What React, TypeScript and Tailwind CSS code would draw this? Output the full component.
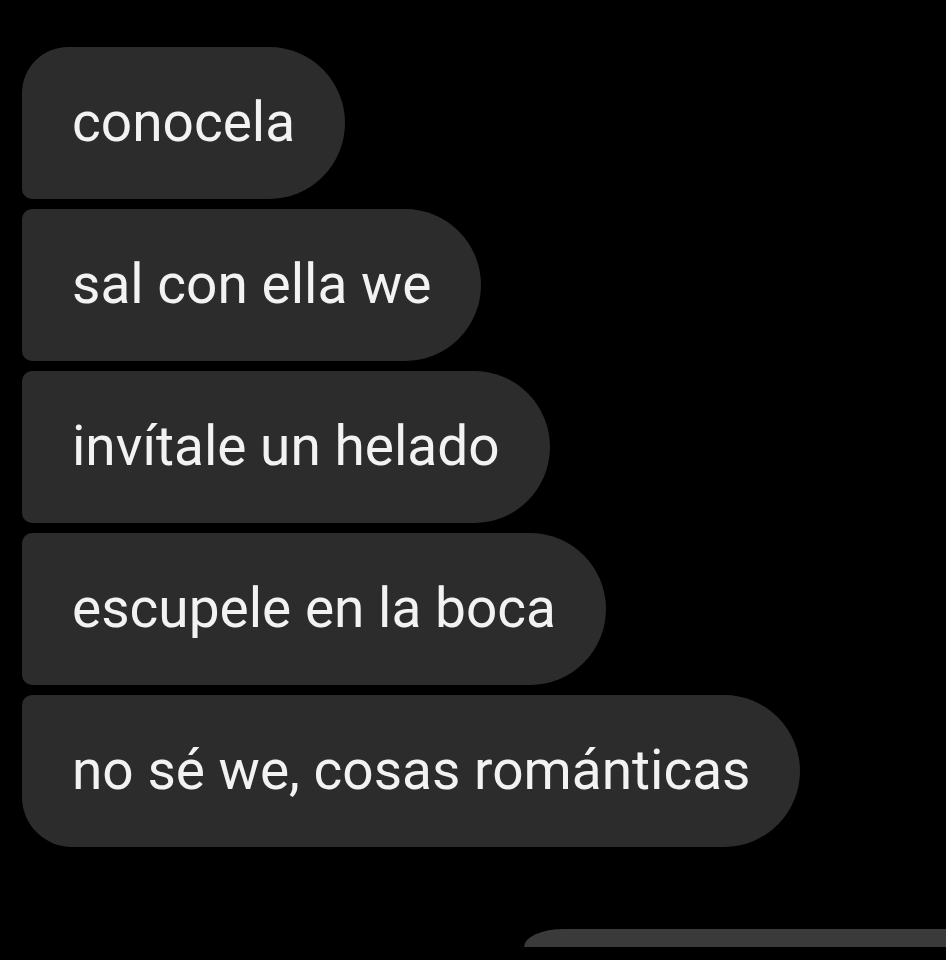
import React from 'react';

const messages = [
  'conocela',
  'sal con ella we',
  'invítale un helado',
  'escupele en la boca',
  'no sé we, cosas románticas',
];

const App: React.FC = () => {
  return (
    <div
      className="w-[946px] h-[960px] bg-black overflow-hidden flex flex-col"
      style={{ fontFamily: 'Roboto, "Liberation Sans", sans-serif' }}
    >
      <div className="flex flex-col items-start gap-[10px] pt-[47px] pl-[22px]">
        {messages.map((text, i) => {
          const first = i === 0;
          const last = i === messages.length - 1;
          return (
            <div
              key={text}
              className={
                'h-[152px] flex items-center px-[50px] bg-[#2c2c2c] text-[#f2f2f2] text-[55px] leading-none whitespace-nowrap rounded-r-[76px] ' +
                (first ? 'rounded-tl-[46px] ' : 'rounded-tl-[10px] ') +
                (last ? 'rounded-bl-[50px]' : 'rounded-bl-[10px]')
              }
            >
              <span className="-mt-[1px]">{text}</span>
            </div>
          );
        })}
      </div>
      {/* top edge of the next (sent) bubble */}
      <div className="mt-[82px] ml-[524px] h-[18px] bg-[#3a3a3a] rounded-tl-[40px_18px]" />
    </div>
  );
};

export default App;
